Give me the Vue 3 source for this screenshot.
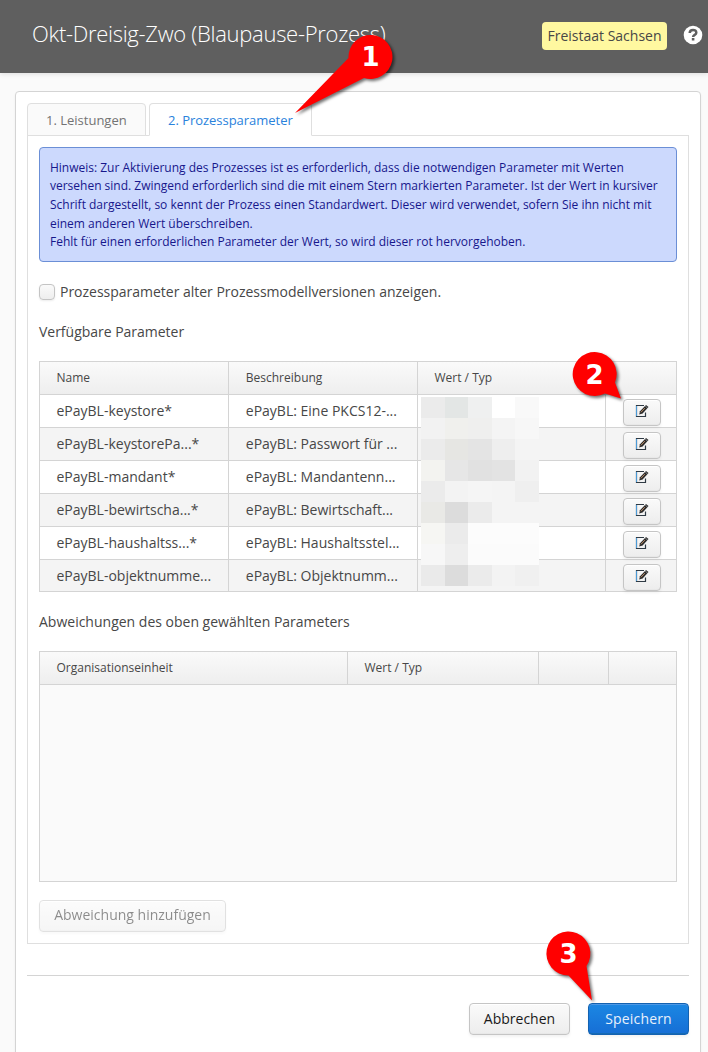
<script setup>
const rows = [
  ['ePayBL-keystore*', 'ePayBL: Eine PKCS12-...'],
  ['ePayBL-keystorePa...*', 'ePayBL: Passwort für ...'],
  ['ePayBL-mandant*', 'ePayBL: Mandantenn...'],
  ['ePayBL-bewirtscha...*', 'ePayBL: Bewirtschaft...'],
  ['ePayBL-haushaltss...*', 'ePayBL: Haushaltsstel...'],
  ['ePayBL-objektnumme...', 'ePayBL: Objektnumm...'],
]

// Tones of the pixelated area that hides the parameter values, row by row
const mosaic = [
  '#ebebeb', '#e3e6e5', '#eff0f0', '#ffffff', '#f9f9f9',
  '#f2f2f2', '#f0f0ed', '#efefee', '#f4f4f4', '#f7f7f7',
  '#ebebeb', '#e6e6e3', '#e4e4e4', '#eeeeee', '#f4f4f4',
  '#f3f3f0', '#e6e6e6', '#e1e1e1', '#e3e3e3', '#f2f2f2',
  '#ebebeb', '#f3f3f3', '#f5f5f5', '#f4f4f4', '#efefef',
  '#e9e9e6', '#dcdcdc', '#ebebeb', '#f4f4f4', '#f4f4f4',
  '#f6f6f3', '#ebebeb', '#fcfcfc', '#fcfcfc', '#fcfcfc',
  '#f7f7f7', '#eeeeee', '#fbfbfb', '#fbfbfb', '#fbfbfb',
  '#eaeaea', '#dcdcdc', '#ebebeb', '#f3f3f3', '#f0f0f0',
]
</script>

<template>
  <div class="page">
    <header class="header">
      <h1>Okt-Dreisig-Zwo (Blaupause-Prozess)</h1>
      <span class="badge">Freistaat Sachsen</span>
      <svg class="help" width="20" height="20" viewBox="0 0 20 20">
        <circle cx="10" cy="10" r="9.3" fill="#fff" />
        <path d="M6.7 8C6.8 3.9 13.3 4 13.3 7.7C13.3 9.900 10.1 9.800 10.1 12" fill="none" stroke="#5f5f5f" stroke-width="2.5" />
        <rect x="8.8" y="13" width="2.6" height="2.5" fill="#5f5f5f" />
      </svg>
    </header>

    <main class="panel">
      <nav class="tabs">
        <div class="tab first">1. Leistungen</div>
        <div class="tab active">2. Prozessparameter</div>
      </nav>
      <section class="content">
        <div class="hint">
          Hinweis: Zur Aktivierung des Prozesses ist es erforderlich, dass die notwendigen Parameter mit Werten<br />
          versehen sind. Zwingend erforderlich sind die mit einem Stern markierten Parameter. Ist der Wert in kursiver<br />
          Schrift dargestellt, so kennt der Prozess einen Standardwert. Dieser wird verwendet, sofern Sie ihn nicht mit<br />
          einem anderen Wert überschreiben.<br />
          Fehlt für einen erforderlichen Parameter der Wert, so wird dieser rot hervorgehoben.
        </div>
        <label class="check"><span class="box"></span><span class="label">Prozessparameter alter Prozessmodellversionen anzeigen.</span></label>
        <div class="caption">Verfügbare Parameter</div>

        <div class="table params">
          <div class="tr head">
            <div>Name</div><div>Beschreibung</div><div>Wert / Typ</div><div></div>
          </div>
          <div v-for="r in rows" :key="r[0]" class="tr">
            <div>{{ r[0] }}</div>
            <div>{{ r[1] }}</div>
            <div></div>
            <div class="action">
              <button class="btn edit">
                <svg width="14" height="14" viewBox="0 0 14 14">
                  <path d="M9 1.500H1.500V12.500H10.500V8.500" fill="none" stroke="#2f3a44" stroke-width="1.2" />
                  <path d="M1.500 2V12" stroke="#4a9ad8" stroke-width="1" />
                  <path d="M4.200 10.500L5 7.200L11 1L13.500 3.100L7.600 9.500Z" fill="#2c2c2c" />
                  <path d="M5.900 8.300L9.800 4.200" stroke="#b98b65" stroke-width="1" />
                  <path d="M10.200 2L12.500 4.100" stroke="#dce4ea" stroke-width=".5" />
                </svg>
              </button>
            </div>
          </div>
          <div class="mosaic">
            <i v-for="(c, i) in mosaic" :key="i" :style="{ background: c }"></i>
          </div>
        </div>

        <div class="caption second">Abweichungen des oben gewählten Parameters</div>
        <div class="table units">
          <div class="tr head">
            <div>Organisationseinheit</div><div>Wert / Typ</div><div></div><div></div>
          </div>
        </div>
        <button class="btn add">Abweichung hinzufügen</button>
      </section>
      <footer class="footer">
        <button class="btn cancel">Abbrechen</button>
        <button class="btn save">Speichern</button>
      </footer>
    </main>

    <svg class="callouts" width="708" height="1052" viewBox="0 0 708 1052">
      <g class="shape">
        <path d="M295 113L348.500 58A22 22 0 1 1 364 78Z" />
        <path d="M621 398.500L605 393.500A22 22 0 1 1 615 382.500Z" />
        <path d="M592 1000.500L568.500 975.500A22 22 0 1 1 586.500 966Z" />
      </g>
      <g class="num">
        <text x="370.500" y="66">1</text>
        <text x="594.500" y="383.500">2</text>
        <text x="568.500" y="962.500">3</text>
      </g>
    </svg>
  </div>
</template>

<style>
body { margin: 0; background: #fafafa; }
</style>

<style scoped>
.page {
  position: relative;
  height: 1052px;
  overflow: hidden;
  background: #fafafa;
  color: #474747;
  font: 14px/21px "Open Sans", sans-serif;
}
.page * { box-sizing: border-box; }
.header {
  display: flex;
  align-items: center;
  height: 73px;
  padding: 0 5px 0 32px;
  background: #5f5f5f;
  box-shadow: 0 1px 5px rgba(0, 0, 0, .12);
}
h1 {
  margin: 0 auto 8px 0;
  font-size: 22px;
  line-height: 32px;
  font-weight: 300;
  letter-spacing: -.290px;
  color: #fff;
  white-space: nowrap;
}
.badge {
  width: 125px;
  height: 28px;
  margin: 0 16px 2px 0;
  border-radius: 4px;
  background: #fff8a0;
  line-height: 28px;
  text-align: center;
  white-space: nowrap;
}
.help { margin: 0 0 3px; }
.panel {
  width: 686px;
  height: 990px;
  margin: 18px 0 0 15px;
  padding: 11px;
  border: 1px solid #d4d4d4;
  border-radius: 4px;
  background: #fff;
  box-shadow: 0 2px 3px rgba(0, 0, 0, .05);
}
.tabs { display: flex; gap: 3px; height: 33px; margin-bottom: -1px; position: relative; }
.tab {
  height: 33px;
  border: 1px solid #dfdfdf;
  border-radius: 4px 4px 0 0;
  background: #fafafa;
  color: #737373;
  font-size: 13px;
  line-height: 33px;
  padding-left: 18px;
  white-space: nowrap;
}
.first { width: 119px; }
.active { width: 163px; background: #fff; border-bottom-color: #fff; color: #2a82dc; letter-spacing: -.030px; }
.content {
  height: 809px;
  padding: 11px;
  border: 1px solid #dfdfdf;
}
.hint {
  height: 115px;
  padding: 10.800px 10px 0;
  border: 1px solid #6b8fd6;
  border-radius: 4px;
  background: #ccd9fd;
  color: #17178c;
  font-size: 12px;
  line-height: 18.600px;
  letter-spacing: -.005px;
  white-space: nowrap;
}
.check { display: flex; align-items: center; gap: 5px; margin-top: 19px; height: 22px; }
.label { margin-bottom: 2px; letter-spacing: -.015px; }
.box {
  width: 16px;
  height: 16px;
  border: 1px solid #c4c4c4;
  border-radius: 4px;
  background: linear-gradient(#fafafa, #eee);
  box-shadow: 0 1px 2px rgba(0, 0, 0, .08);
}
.caption { margin: 18px 0 19px; letter-spacing: -.020px; }
.caption.second { margin: 19px 0; letter-spacing: 0; }
.table { position: relative; border: 1px solid #d4d4d4; background: #fff; }
.params { height: 231px; }
.units { height: 231px; background: #fafafa; }
.tr {
  display: grid;
  height: 33px;
  border-bottom: 1px solid #d4d4d4;
  line-height: 32px;
}
.params .tr { grid-template-columns: 189px 189px 188px 1fr; }
.units .tr { grid-template-columns: 308px 191px 70px 1fr; }
.tr > div { padding-left: 16.500px; border-right: 1px solid #d4d4d4; white-space: nowrap; }
.tr > div:last-child { border-right: 0; }
.params .tr > div:nth-child(2) { padding-left: 16.800px; }
.params .tr:nth-child(odd):not(.head) { background: #f4f4f4; }
.params .tr:nth-child(7) { height: 31px; border-bottom: 0; }
.tr.head { font-size: 12px; background: linear-gradient(#fafafa, #eee); }
.tr > .action { padding: 4px 0 0 17px; line-height: 0; }
.mosaic {
  position: absolute;
  left: 381px;
  top: 35px;
  display: grid;
  grid-template-columns: 24px 23px 24px 23px 24px;
  grid-auto-rows: 21px;
}
.btn {
  display: block;
  height: 32px;
  margin: 0;
  padding: 0;
  border: 1px solid #c5c5c5;
  border-radius: 4px;
  background: linear-gradient(#fafafa, #ededed);
  box-shadow: 0 2px 3px rgba(0, 0, 0, .05), inset 0 1px 0 #fff, inset 0 -1px 0 #e8e8e8;
  font: 14px/30px "Open Sans", sans-serif;
  color: #191919;
}
.edit { width: 38px; height: 27px; text-align: center; }
.edit svg { display: block; margin: -3px auto 0; }
.add { width: 187px; margin-top: 18px; padding-bottom: 2px; line-height: 28px; opacity: .5; }
.footer {
  display: flex;
  justify-content: flex-end;
  gap: 18px;
  margin-top: 31px;
  padding-top: 27px;
  border-top: 1px solid #d4d4d4;
}
.footer .btn { width: 101px; }
.footer .save {
  border-color: #1362b1;
  background: linear-gradient(#1b87e3, #166ed5);
  box-shadow: 0 2px 3px rgba(0, 0, 0, .05), inset 0 1px 0 #4d98e6, inset 0 -1px 0 #156ab3;
  color: #e8f1fb;
  letter-spacing: .180px;
}
.callouts { position: absolute; left: 0; top: 0; pointer-events: none; }
.shape { fill: #f00; filter: drop-shadow(2px 2px 1.500px rgba(0, 0, 0, .55)); }
.num { fill: #fff; font: bold 26px "DejaVu Sans", sans-serif; text-anchor: middle; }
</style>
